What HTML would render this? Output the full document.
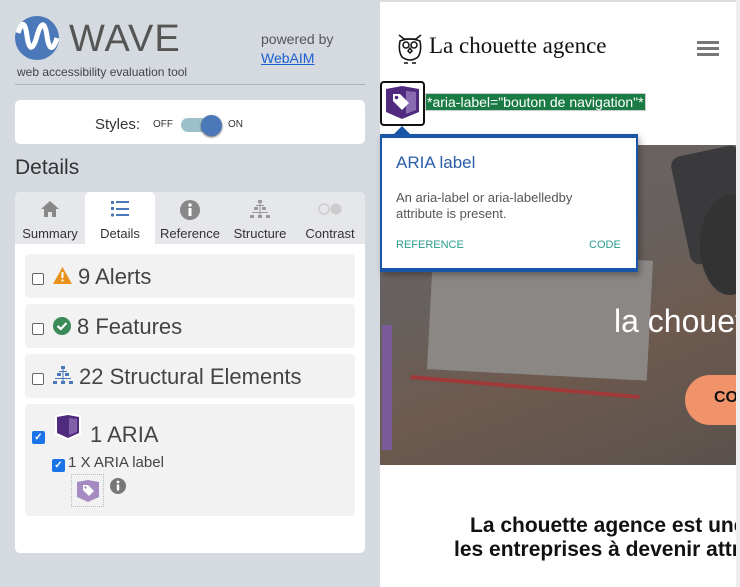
<!DOCTYPE html>
<html><head><meta charset="utf-8"><style>
*{margin:0;padding:0;box-sizing:border-box}
body{width:740px;height:587px;overflow:hidden;font-family:"Liberation Sans",sans-serif;position:relative;background:#fff}
#left{position:absolute;left:0;top:0;width:380px;height:587px;background:#d5d9e0}
#right{position:absolute;left:380px;top:0;width:356px;height:587px;overflow:hidden}
.abs{position:absolute}
.card{background:#fff;border-radius:5px}
.item{position:absolute;left:25px;width:330px;background:#f2f2f2;border-radius:4px}
.cb{position:absolute;width:12px;height:12px;border:1px solid #666;border-radius:2px;background:#fff}
.cbc{position:absolute;width:13px;height:13px;background:#1a73e8;border-radius:2px;color:#fff;font-size:10px;line-height:13px;text-align:center;font-weight:bold}
.big{position:absolute;font-size:22px;color:#444}
.tab{position:absolute;top:192px;height:51px;width:70px;text-align:center;font-size:13px;color:#333}
.tab span{position:absolute;bottom:2px;left:0;right:0}
</style></head><body>
<div id="left">
 <svg class="abs" style="left:15px;top:16px" width="44" height="44" viewBox="0 0 44 44"><circle cx="22" cy="22" r="22" fill="#4a78b8"/><path d="M3 17 C7 5 10 5 12 20 C14 35 18 35 22 20 C26 5 30 5 32 20 C34 35 38 35 42 22" stroke="#fff" stroke-width="5" fill="none"/></svg>
 <div class="abs" style="left:69px;top:18px;font-size:38px;color:#555;letter-spacing:1px">WAVE</div>
 <div class="abs" style="left:17px;top:65px;font-size:12px;color:#444">web accessibility evaluation tool</div>
 <div class="abs" style="left:261px;top:31px;font-size:14px;color:#555">powered by</div>
 <div class="abs" style="left:261px;top:50px;font-size:14px;color:#1a5fd0;text-decoration:underline">WebAIM</div>
 <div class="abs" style="left:15px;top:84px;width:350px;height:1px;background:#b0b4ba"></div>
 <div class="abs card" style="left:15px;top:100px;width:350px;height:44px"></div>
 <div class="abs" style="left:95px;top:116px;font-size:15px;color:#333">Styles:</div>
 <div class="abs" style="left:153px;top:119px;font-size:10px;color:#333">OFF</div>
 <div class="abs" style="left:181px;top:118px;width:38px;height:14px;border-radius:7px;background:#9dc0cb"></div>
 <div class="abs" style="left:201px;top:115px;width:21px;height:21px;border-radius:50%;background:#4a78b8;box-shadow:0 1px 2px #555"></div>
 <div class="abs" style="left:228px;top:119px;font-size:10px;color:#333">ON</div>
 <div class="abs" style="left:15px;top:156px;font-size:21px;color:#333">Details</div>
 <div class="abs" style="left:15px;top:192px;width:350px;height:361px;background:#fff;border-radius:5px"></div>
 <div class="abs" style="left:15px;top:192px;width:350px;height:52px;background:#e6e7ea;border-radius:5px 5px 0 0"></div>
 <div class="abs" style="left:85px;top:192px;width:70px;height:52px;background:#fff;border-radius:5px 5px 0 0"></div>
 <div class="tab" style="left:15px"><svg class="abs" style="left:25px;top:8px" width="20" height="18" viewBox="0 0 20 18"><path d="M10 1 L1 9 H4 V17 H8 V12 H12 V17 H16 V9 H19Z" fill="#888"/></svg><span>Summary</span></div>
 <div class="tab" style="left:85px"><svg class="abs" style="left:25px;top:8px" width="20" height="18" viewBox="0 0 20 18"><g fill="#4a78b8"><rect x="1" y="1" width="3" height="3"/><rect x="6" y="1" width="13" height="2"/><rect x="1" y="7" width="3" height="3"/><rect x="6" y="8" width="13" height="2"/><circle cx="2.5" cy="15" r="1.6"/><rect x="6" y="14" width="13" height="2"/></g></svg><span>Details</span></div>
 <div class="tab" style="left:155px"><svg class="abs" style="left:25px;top:8px" width="20" height="20" viewBox="0 0 20 20"><circle cx="10" cy="10" r="10" fill="#888"/><rect x="8.5" y="8" width="3" height="8" fill="#fff"/><circle cx="10" cy="5" r="1.7" fill="#fff"/></svg><span>Reference</span></div>
 <div class="tab" style="left:225px"><svg class="abs" style="left:25px;top:8px" width="20" height="20" viewBox="0 0 20 20"><g fill="#999"><rect x="8" y="0" width="4" height="3"/><rect x="4" y="7" width="4" height="3"/><rect x="12" y="7" width="4" height="3"/><rect x="0" y="15" width="4" height="3"/><rect x="8" y="15" width="4" height="3"/><rect x="16" y="15" width="4" height="3"/><rect x="9.5" y="3" width="1" height="12"/><rect x="2" y="12" width="16" height="1"/><rect x="6" y="5" width="8" height="1"/></g></svg><span>Structure</span></div>
 <div class="tab" style="left:295px"><svg class="abs" style="left:22px;top:11px" width="26" height="12" viewBox="0 0 26 12"><circle cx="7" cy="6" r="5" fill="none" stroke="#ccc" stroke-width="1.5"/><circle cx="19" cy="6" r="5.5" fill="#ccc"/></svg><span>Contrast</span></div>

 <div class="item" style="top:254px;height:44px"><div class="cb" style="left:7px;top:19px"></div>
  <svg class="abs" style="left:28px;top:13px" width="19" height="17" viewBox="0 0 19 17"><path d="M9.5 0 L19 17 H0Z" fill="#e8911c"/><rect x="8.5" y="5" width="2" height="6" fill="#fff"/><rect x="8.5" y="12.5" width="2" height="2" fill="#fff"/></svg>
  <div class="big" style="left:53px;top:10px">9 Alerts</div></div>
 <div class="item" style="top:304px;height:44px"><div class="cb" style="left:7px;top:19px"></div>
  <svg class="abs" style="left:28px;top:13px" width="18" height="18" viewBox="0 0 18 18"><circle cx="9" cy="9" r="9" fill="#3b8a5a"/><path d="M4.5 9 L7.8 12 L13.5 6" stroke="#fff" stroke-width="2.2" fill="none"/></svg>
  <div class="big" style="left:52px;top:10px">8 Features</div></div>
 <div class="item" style="top:354px;height:44px"><div class="cb" style="left:7px;top:19px"></div>
  <svg class="abs" style="left:28px;top:12px" width="20" height="20" viewBox="0 0 20 20"><g fill="#4a78b8"><rect x="8" y="0" width="4" height="3"/><rect x="4" y="7" width="4" height="3"/><rect x="12" y="7" width="4" height="3"/><rect x="0" y="15" width="4" height="3"/><rect x="8" y="15" width="4" height="3"/><rect x="16" y="15" width="4" height="3"/><rect x="9.5" y="3" width="1" height="12"/><rect x="2" y="12" width="16" height="1"/><rect x="6" y="5" width="8" height="1"/></g></svg>
  <div class="big" style="left:54px;top:10px">22 Structural Elements</div></div>
 <div class="item" style="top:404px;height:112px"><div class="cbc" style="left:7px;top:27px">✓</div>
  <svg class="abs" style="left:29px;top:9px" width="28" height="28" viewBox="0 0 28 28"><path d="M1 2 L14 0 L27 2 V22 L14 27 L1 22Z" fill="#fff"/><path d="M3 4 L14 2 L25 4 V20 L14 25 L3 20Z" fill="#4f2a7f"/><path d="M15 5 L23 6 V19 L15 22Z" fill="#8060a8"/></svg>
  <div class="big" style="left:65px;top:18px">1 ARIA</div>
  <div class="cbc" style="left:27px;top:55px">✓</div>
  <div class="abs" style="left:43px;top:50px;font-size:15px;color:#444">1 X ARIA label</div>
  <div class="abs" style="left:46px;top:70px;width:33px;height:33px;border:1px dotted #bbb"></div>
  <svg class="abs" style="left:52px;top:76px" width="22" height="22" viewBox="0 0 22 22"><path d="M0 2 L11 0 L22 2 V17 L11 22 L0 17Z" fill="#a58bc2"/><path d="M6 5 H11 L17 11 L12 16 L6 10Z" fill="#fff"/><circle cx="8.5" cy="7.5" r="1.2" fill="#a58bc2"/></svg>
  <svg class="abs" style="left:85px;top:74px" width="16" height="16" viewBox="0 0 16 16"><circle cx="8" cy="8" r="8" fill="#777"/><rect x="6.8" y="6.5" width="2.4" height="6" fill="#fff"/><circle cx="8" cy="4" r="1.4" fill="#fff"/></svg>
 </div>
</div>

<div class="abs" style="left:736px;top:0;width:4px;height:587px;background:#eee"></div>
<div id="right">
 <div class="abs" style="left:0;top:0;width:360px;height:2px;background:#ddd"></div>
 <svg class="abs" style="left:16px;top:33px" width="28" height="32" viewBox="0 0 28 32"><g fill="none" stroke="#111" stroke-width="1.5"><path d="M3 2 L8 6 H20 L25 2"/><path d="M4 8 Q2 18 6 24 Q14 30 22 24 Q26 18 24 8 Q14 4 4 8Z"/><circle cx="10" cy="12" r="3"/><circle cx="18" cy="12" r="3"/><path d="M14 15 L12 18 L14 20 L16 18Z"/><path d="M8 30 H12 M16 30 H20"/></g></svg>
 <div class="abs" style="left:49px;top:33px;font-family:'Liberation Serif',serif;font-size:23px;color:#111">La chouette agence</div>
 <div class="abs" style="left:317px;top:41px;width:22px;height:3px;background:#777"></div>
 <div class="abs" style="left:317px;top:47px;width:22px;height:3px;background:#777"></div>
 <div class="abs" style="left:317px;top:53px;width:22px;height:3px;background:#777"></div>

 <div class="abs" style="left:0;top:145px;width:356px;height:320px;background:linear-gradient(160deg,#6e6664 0%,#66605e 40%,#6e5a4e 65%,#5a524e 100%)"></div>
 <div class="abs" style="left:50px;top:255px;width:220px;height:120px;background:#8a8785;transform:rotate(3deg)"></div>
 <div class="abs" style="left:30px;top:385px;width:230px;height:4px;background:#a03a3a;transform:rotate(5deg)"></div>
 <div class="abs" style="left:2px;top:325px;width:10px;height:125px;background:#7a5a9a"></div>
 <div class="abs" style="left:300px;top:150px;width:70px;height:110px;background:#3a3a3c;border-radius:10px;transform:rotate(-12deg)"></div>
 <div class="abs" style="left:320px;top:195px;width:60px;height:100px;background:#333;border-radius:50%"></div>
 <div class="abs" style="left:234px;top:303px;font-size:32px;color:#fff;white-space:nowrap">la chouette agence</div>
 <div class="abs" style="left:305px;top:375px;width:80px;height:50px;border-radius:25px;background:#f0936a"></div>
 <div class="abs" style="left:334px;top:389px;font-size:16px;font-weight:bold;color:#111">CONTACT</div>

 <div class="abs" style="left:90px;top:514px;font-size:21px;font-weight:bold;color:#111;white-space:nowrap">La chouette agence est une agence</div>
 <div class="abs" style="left:74px;top:538px;font-size:21px;font-weight:bold;color:#111;white-space:nowrap">les entreprises à devenir attractives</div>
</div>

<!-- aria marker -->
<div class="abs" style="left:380px;top:81px;width:45px;height:45px;border:2px solid #111;border-radius:4px;background:#fff"></div>
<svg class="abs" style="left:386px;top:86px" width="33" height="33" viewBox="0 0 33 33"><path d="M0 3 L16 0 L33 3 V26 L16 33 L0 26Z" fill="#4f2a7f"/><path d="M20 5 L30 6 V24 L20 28Z" fill="#8a6ab0"/><path d="M7 8 H14 L23 17 L16 24 L7 15Z" fill="#fff"/><circle cx="10.5" cy="11.5" r="1.8" fill="#4f2a7f"/></svg>
<div class="abs" style="left:425px;top:93px;height:18px;padding:0 1px;background:#1b7b44;color:#fff;font-size:14px;line-height:17px;border:1px solid #ccc;white-space:nowrap">*aria-label="bouton de navigation"*</div>

<!-- popup -->
<svg class="abs" style="left:392px;top:124px" width="20" height="12" viewBox="0 0 20 12"><path d="M0 12 L10 2 L20 12Z" fill="#1a56a8"/></svg>
<div class="abs" style="left:380px;top:134px;width:258px;height:138px;background:#fff;border:4px solid #1a56a8;border-width:4px 2px 4px 2px;box-shadow:2px 3px 6px rgba(0,0,0,.3)"></div>
<div class="abs" style="left:396px;top:153px;font-size:17px;color:#2a5ea8">ARIA label</div>
<div class="abs" style="left:396px;top:190px;font-size:13px;color:#555;line-height:16px">An aria-label or aria-labelledby<br>attribute is present.</div>
<div class="abs" style="left:396px;top:239px;font-size:11px;color:#2a9d8f">REFERENCE</div>
<div class="abs" style="left:589px;top:239px;font-size:11px;color:#2a9d8f">CODE</div>
</body></html>
